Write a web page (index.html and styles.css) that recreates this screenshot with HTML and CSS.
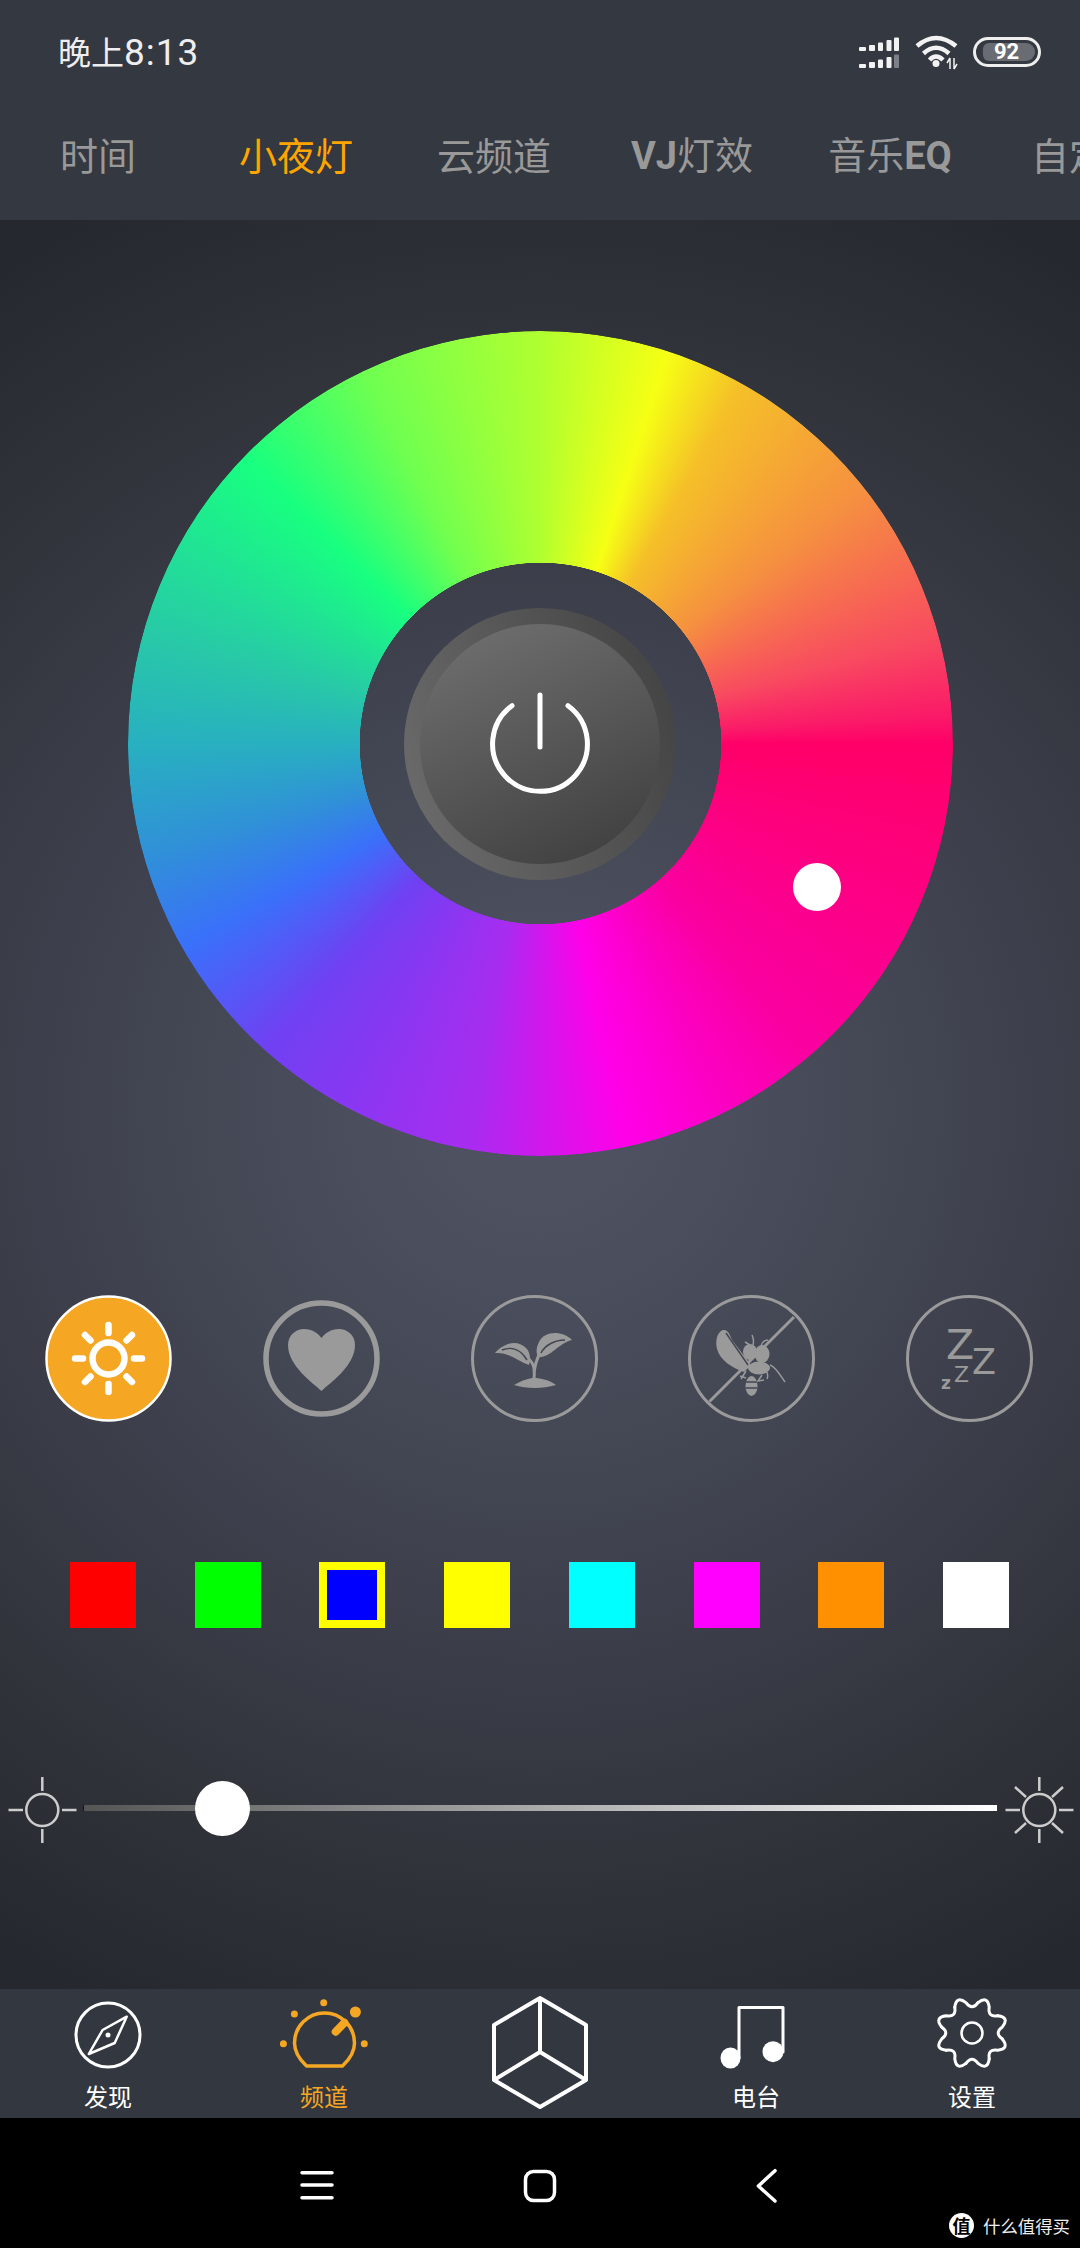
FILE: index.html
```html
<!DOCTYPE html>
<html lang="zh">
<head>
<meta charset="utf-8">
<title>小夜灯</title>
<link rel="stylesheet" href="styles.css">
</head>
<body>
<div class="app">
  <header class="header">
    <div class="status">
      <span class="time">晚上<span class="time-num">8:13</span></span>
      <div class="status-icons">
        <svg class="net" width="105" height="40" viewBox="0 0 105 40">
          <g class="bars">
            <rect x="4" y="15" width="7" height="4" rx="1"/><rect x="14" y="13" width="6" height="6" rx="1"/><rect x="23" y="10.500" width="5" height="8.500" rx="1"/><rect x="31.500" y="8" width="5" height="11" rx="1"/><rect x="39" y="5.500" width="5" height="13.500" rx="1"/>
            <rect x="4" y="32" width="7" height="4" rx="1"/><rect x="14" y="30" width="6" height="6" rx="1"/><rect x="23" y="27.500" width="5" height="8.500" rx="1"/><rect x="31.500" y="25" width="5" height="11" rx="1"/>
            <rect class="bar-off" x="39" y="22.500" width="5" height="13.500" rx="1"/>
          </g>
          <g class="wifi">
            <path d="M62 14 Q81 -2 101 14"/><path d="M68.500 21.500 Q81 10 94 21.500"/><path d="M74.500 28 Q81 21 88 28"/>
            <circle class="wifi-dot" cx="81" cy="31.500" r="3.500"/>
            <path class="wifi-arrow" d="M95 26v11M95 26l-3 5M99 37v-11M99 37l3-5"/>
          </g>
        </svg>
        <div class="battery"><span class="battery-level">92</span></div>
      </div>
    </div>
    <nav class="tabs">
      <span class="tab">时间</span>
      <span class="tab tab-active">小夜灯</span>
      <span class="tab">云频道</span>
      <span class="tab"><b class="latin">VJ</b>灯效</span>
      <span class="tab">音乐<b class="latin">EQ</b></span>
      <span class="tab">自定义</span>
    </nav>
  </header>

  <main class="main">
    <section class="wheel-wrap">
      <div class="wheel"></div>
      <div class="knob">
        <div class="knob-inner">
          <svg class="power" width="120" height="120" viewBox="0 0 120 120">
            <path d="M32 21.700A47.400 47.400 0 1 0 88 21.700"/>
            <path d="M60 11V63"/>
          </svg>
        </div>
      </div>
      <span class="wheel-dot"></span>
    </section>

    <section class="modes">
      <div class="mode mode-on">
        <svg width="127" height="127" viewBox="0 0 127 127">
          <circle class="sun-disc" cx="63.500" cy="63.500" r="62"/>
          <g class="sun-line">
            <circle cx="63.500" cy="63.500" r="16"/>
            <path d="M63.500 30V38M63.500 89V97M30 63.500H38M89 63.500H97M40 40L45.500 45.500M87 40L81.500 45.500M40 87L45.500 81.500M87 87L81.500 81.500"/>
          </g>
        </svg>
      </div>
      <div class="mode mode-heart">
        <svg width="117" height="117" viewBox="0 0 117 117">
          <circle class="ring-thick" cx="58.500" cy="58.500" r="55.500"/>
          <path class="fill-grey" d="M58.500 91C50 83 25 66 25 45C25 35 33 29 41 29C49 29 55 33 58.500 38C62 33 68 29 76 29C84 29 92 35 92 45C92 66 67 83 58.500 91Z"/>
        </svg>
      </div>
      <div class="mode">
        <svg width="127" height="127" viewBox="0 0 127 127">
          <circle class="ring" cx="63.500" cy="63.500" r="62"/>
          <path class="fill-grey" d="M24 58C32 49 46 43 56 54C59 58 60 64 58 70C46 66 38 57 24 58Z"/>
          <path class="fill-grey" d="M101 45C92 36 74 35 68 47C65 53 65 58 67 62C80 63 86 49 101 45Z"/>
          <path class="fill-grey" d="M43 90C52 85 58 83 63 83C70 83 78 85 85 90C72 94 55 94 43 90Z"/>
          <path class="stem" d="M63 84C64 74 63 69 58 64M63 78C64 70 65 66 68 60"/>
          <path class="vein" d="M31 55C41 51 50 55 56 65M70 58C74 50 84 45 94 45"/>
        </svg>
      </div>
      <div class="mode">
        <svg width="127" height="127" viewBox="0 0 127 127">
          <circle class="ring" cx="63.500" cy="63.500" r="62"/>
          <path class="slash" d="M106 22L21.500 106.500"/>
          <path class="fill-grey" d="M35 35C29 37 27 46 29 54C32 65 44 73 56 77L63 70L44 45C42 40 40 34 35 35Z"/>
          <path class="vein" d="M38 38L60 70"/>
          <ellipse class="fill-grey" cx="62" cy="57" rx="7" ry="8"/>
          <ellipse class="fill-grey" cx="74" cy="59" rx="7.500" ry="9"/>
          <ellipse class="fill-grey" cx="71" cy="73" rx="11" ry="6.500"/>
          <ellipse class="fill-grey" cx="63.500" cy="91" rx="6" ry="10"/>
          <path class="vein" d="M58 87H69M58 93H69"/>
          <path class="bug-leg" d="M65 50C66 46 65 42 64 40M73 51C74 47 76 45 80 45M57 47L62 50M82 70C88 72 92 80 97 87M78 76C80 78 80 82 79 84M74 80L70 86L76 85M58 76L53 84M52 81L58 83"/>
        </svg>
      </div>
      <div class="mode">
        <svg width="127" height="127" viewBox="0 0 127 127">
          <circle class="ring" cx="63.500" cy="63.500" r="62"/>
          <text class="zz zz-1" x="40" y="64">Z</text>
          <text class="zz zz-2" x="66" y="79">Z</text>
          <text class="zz zz-3" x="48" y="87">Z</text>
          <text class="zz zz-4" x="35" y="94">z</text>
        </svg>
      </div>
    </section>

    <section class="swatches">
      <span class="swatch swatch-red"></span>
      <span class="swatch swatch-green"></span>
      <span class="swatch swatch-blue"></span>
      <span class="swatch swatch-yellow"></span>
      <span class="swatch swatch-cyan"></span>
      <span class="swatch swatch-magenta"></span>
      <span class="swatch swatch-orange"></span>
      <span class="swatch swatch-white"></span>
    </section>

    <section class="brightness">
      <svg class="sun-small" width="83" height="70" viewBox="0 0 83 70">
        <circle cx="42.300" cy="35" r="16"/>
        <path d="M42.300 2V16M42.300 54V68M8.500 35H23M62 35H76.500"/>
      </svg>
      <div class="track"><span class="thumb"></span></div>
      <svg class="sun-small" width="83" height="70" viewBox="0 0 83 70">
        <circle cx="42.300" cy="35" r="16"/>
        <path d="M42.300 2V16M42.300 54V68M8.500 35H23M62 35H76.500M18 12L29 22M66 12L55 22M18 58L29 48M66 58L55 48"/>
      </svg>
    </section>
  </main>

  <nav class="tabbar">
    <div class="item">
      <svg class="line-white" width="100" height="92" viewBox="0 0 100 92">
        <circle cx="50" cy="46" r="32"/>
        <path class="kite" d="M68.700 27.700L44.600 41L30.800 65L56.700 54Z"/>
        <circle class="dot-white" cx="50" cy="46" r="2.500"/>
      </svg>
      <span class="label">发现</span>
    </div>
    <div class="item item-active">
      <svg class="line-orange" width="100" height="92" viewBox="0 0 100 92">
        <path d="M32.500 77C25 70 20.500 63 20.500 54A30 30 0 0 1 80.500 54C80.500 63 76 70 68.500 77Z"/>
        <path class="needle" d="M61.700 42.700L70.400 33.700"/>
        <circle class="dot-orange" cx="9.400" cy="54.700" r="3.500"/>
        <circle class="dot-orange" cx="20.400" cy="25" r="3.500"/>
        <circle class="dot-orange" cx="49.700" cy="13.700" r="3.500"/>
        <circle class="dot-orange" cx="81.400" cy="23" r="5.500"/>
        <circle class="dot-orange" cx="90.300" cy="54.700" r="3.500"/>
      </svg>
      <span class="label">频道</span>
    </div>
    <div class="item">
      <svg class="line-white cube" width="100" height="129" viewBox="0 0 100 129">
        <path d="M50 9L96 36V91L50 118L4 91V36ZM50 9V63M50 63L4 91M50 63L96 91"/>
      </svg>
    </div>
    <div class="item">
      <svg class="line-white" width="100" height="92" viewBox="0 0 100 92">
        <path d="M33 69V18.500H77V63"/>
        <ellipse class="dot-white" cx="24.500" cy="69" rx="10" ry="10.500"/>
        <ellipse class="dot-white" cx="67" cy="62.700" rx="10.500" ry="10.500"/>
      </svg>
      <span class="label">电台</span>
    </div>
    <div class="item">
      <svg class="line-white gear" width="100" height="92" viewBox="0 0 100 92">
        <defs>
          <path id="gear-tooth" d="M-6.050 -30.400Q0 -41 6.050 -30.400Q8.420 -20.300 17.200 -25.800"/>
        </defs>
        <g transform="translate(50 44)">
          <use href="#gear-tooth" transform="rotate(22.500)"/>
          <use href="#gear-tooth" transform="rotate(67.500)"/>
          <use href="#gear-tooth" transform="rotate(112.500)"/>
          <use href="#gear-tooth" transform="rotate(157.500)"/>
          <use href="#gear-tooth" transform="rotate(202.500)"/>
          <use href="#gear-tooth" transform="rotate(247.500)"/>
          <use href="#gear-tooth" transform="rotate(292.500)"/>
          <use href="#gear-tooth" transform="rotate(337.500)"/>
          <circle r="10.500"/>
        </g>
      </svg>
      <span class="label">设置</span>
    </div>
  </nav>

  <footer class="sysnav">
    <svg class="sys" width="60" height="60" viewBox="0 0 60 60"><path d="M15 14.700H45M15 27H45M15 39.700H45"/></svg>
    <svg class="sys" width="60" height="60" viewBox="0 0 60 60"><rect x="15.500" y="13.500" width="29" height="29" rx="8"/></svg>
    <svg class="sys" width="60" height="60" viewBox="0 0 60 60"><path d="M42 12.700L25.400 28L42 43"/></svg>
    <div class="watermark"><span class="wm-logo">值</span><span class="wm-text">什么值得买</span></div>
  </footer>
</div>
</body>
</html>
```

FILE: styles.css
```css
* { box-sizing: border-box; }
html, body { margin: 0; padding: 0; background: #000; }
body { font-family: "Noto Sans CJK SC", "Roboto", sans-serif; }
.app { width: 1080px; height: 2248px; display: flex; flex-direction: column; overflow: hidden; }

/* header */
.header { height: 220px; flex: none; background: #343840; }
.status { height: 104px; display: flex; align-items: center; justify-content: space-between; padding: 0 39px 0 58px; }
.time { font-size: 33px; color: #eee; line-height: 1; }
.time-num { font-family: "Roboto", sans-serif; font-size: 37px; letter-spacing: 1px; }
.status-icons { display: flex; align-items: center; gap: 13px; }
.net { display: block; }
.bars rect { fill: #f2f2f2; }
.bars .bar-off { fill: #7d8086; }
.wifi path { fill: none; stroke: #f2f2f2; stroke-width: 4.500; stroke-linecap: butt; }
.wifi .wifi-arrow { stroke-width: 1.500; }
.wifi-dot { fill: #f2f2f2; }
.battery { width: 68px; height: 30px; border: 3px solid #eee; border-radius: 15px; padding: 3px 3px 3px 7px; display: flex; }
.battery-level { flex: 1; background: #696c73; border-radius: 6px 9px 9px 6px; color: #fff; font: 700 22px/18px "Roboto", sans-serif; text-align: center; padding-right: 5px; }

.tabs { height: 104px; padding-bottom: 4px; display: flex; align-items: center; white-space: nowrap; margin-left: -1px; }
.tab { flex: 0 0 198px; text-align: center; font-size: 38px; line-height: 1; color: #999; }
.tab-active { color: #ffa500; }
.latin { font-family: "Roboto", sans-serif; font-weight: 700; }

/* main */
.main { height: 1769px; flex: none; padding-top: 111px; background: radial-gradient(circle 1000px at 540px 885px, #4f5363 0, #4a4e5c 200px, #3a3d48 570px, #303239 790px, #25282e 1000px); }

.wheel-wrap { position: relative; width: 825px; height: 825px; margin: 0 auto; display: grid; place-items: center; }
.wheel-wrap > * { grid-area: 1 / 1; }
.wheel { width: 100%; height: 100%; border-radius: 50%;
  background: conic-gradient(from 90deg, #ff0068 0deg, #fa00a0 49deg, #ff00e8 78deg, #a82cf0 100deg, #7040f2 132deg, #3a70fa 150deg, #3090d8 164deg, #28b0c0 180deg, #28c8a8 195deg, #18ff80 224deg, #70ff50 245deg, #b0ff30 270deg, #f6ff14 288deg, #f5c028 299deg, #f59040 322deg, #f84a60 345deg, #fa1a68 356deg, #ff0068 360deg);
  -webkit-mask: radial-gradient(circle, transparent 180.500px, #000 181px);
  mask: radial-gradient(circle, transparent 180.500px, #000 181px); }
.knob { width: 272px; height: 272px; border-radius: 50%; background: linear-gradient(70deg, #6e6e6e, #404040); display: flex; align-items: center; justify-content: center; }
.knob-inner { width: 240px; height: 240px; border-radius: 50%; background: linear-gradient(155deg, #727272, #3c3c3c); display: flex; align-items: center; justify-content: center; }
.power path { fill: none; stroke: #fff; stroke-width: 5; stroke-linecap: round; }
.wheel-dot { position: absolute; left: 665px; top: 532px; width: 48px; height: 48px; border-radius: 50%; background: #fff; }

/* modes */
.modes { display: flex; justify-content: space-between; align-items: center; margin-top: 139px; padding: 0 47px 0 45px; height: 127px; }
.mode { display: flex; }
.mode svg { display: block; }
.sun-disc { fill: #f5a623; stroke: #fff; stroke-width: 2.500; }
.sun-line circle, .sun-line path { fill: none; stroke: #fff; stroke-width: 6.500; stroke-linecap: round; }
.ring { fill: none; stroke: #9a9a9a; stroke-width: 3; }
.ring-thick { fill: none; stroke: #9a9a9a; stroke-width: 5.500; }
.fill-grey { fill: #9a9a9a; }
.stem { fill: none; stroke: #9a9a9a; stroke-width: 3; }
.vein { fill: none; stroke: #434652; stroke-width: 1.500; }
.slash { fill: none; stroke: #9a9a9a; stroke-width: 3; }
.bug-leg { fill: none; stroke: #9a9a9a; stroke-width: 1.500; }
.zz { fill: #9a9a9a; font-family: "DejaVu Sans", sans-serif; }
.zz-1 { font-size: 41px; }
.zz-2 { font-size: 35px; }
.zz-3 { font-size: 22px; }
.zz-4 { font-size: 17px; font-weight: 700; }

/* swatches */
.swatches { display: flex; justify-content: space-between; margin-top: 140px; padding: 0 71px 0 70px; }
.swatch { width: 66px; height: 66px; display: block; }
.swatch-red { background: #f00; }
.swatch-green { background: #0f0; }
.swatch-blue { background: #00f; border: 8px solid #ff0; }
.swatch-yellow { background: #ff0; }
.swatch-cyan { background: #0ff; }
.swatch-magenta { background: #f0f; }
.swatch-orange { background: #ff9000; }
.swatch-white { background: #fff; }

/* brightness */
.brightness { display: flex; align-items: flex-start; margin-top: 147px; }
.sun-small { flex: none; display: block; }
.sun-small circle, .sun-small path { fill: none; stroke: #ccc; stroke-width: 2.500; }
.track { position: relative; flex: 1; height: 6px; margin-top: 30px; background: linear-gradient(90deg, #555, #fff); border-left: 1px solid #111; }
.thumb { position: absolute; left: 111px; top: -24px; width: 55px; height: 55px; border-radius: 50%; background: #fff; }

/* tab bar */
.tabbar { height: 129px; flex: none; display: flex; background: #333840; }
.item { flex: 1; display: flex; flex-direction: column; align-items: center; }
.item svg { display: block; flex: none; }
.label { font-size: 24px; line-height: 30px; color: #fff; }
.item-active .label { color: #f5a623; }
.line-white circle, .line-white path, .line-white use { fill: none; stroke: #fff; stroke-width: 3; stroke-linecap: round; stroke-linejoin: round; }
.line-white .dot-white, .dot-white { fill: #fff; stroke: none; }
.line-white .kite { stroke-width: 2.500; }
.cube path { stroke-width: 4; }
.gear use, .gear circle { stroke-width: 2.500; }
.line-orange path { fill: none; stroke: #f5a623; stroke-width: 3.500; stroke-linejoin: round; }
.line-orange .needle { stroke-width: 8; stroke-linecap: round; }
.dot-orange { fill: #f5a623; }

/* system nav */
.sysnav { position: relative; height: 130px; flex: none; background: #000; display: flex; gap: 163px; padding: 40px 0 0 287px; }
.sys { display: block; flex: none; }
.sys path, .sys rect { fill: none; stroke: #fff; stroke-width: 3.500; stroke-linecap: round; stroke-linejoin: round; }
.watermark { position: absolute; left: 949px; top: 95px; display: flex; align-items: center; gap: 9px; }
.wm-logo { width: 25px; height: 25px; border-radius: 50%; background: #fff; color: #000; font-size: 18px; line-height: 25px; text-align: center; font-weight: 700; }
.wm-text { font-size: 17.400px; line-height: 25px; color: #eee; white-space: nowrap; }
```
